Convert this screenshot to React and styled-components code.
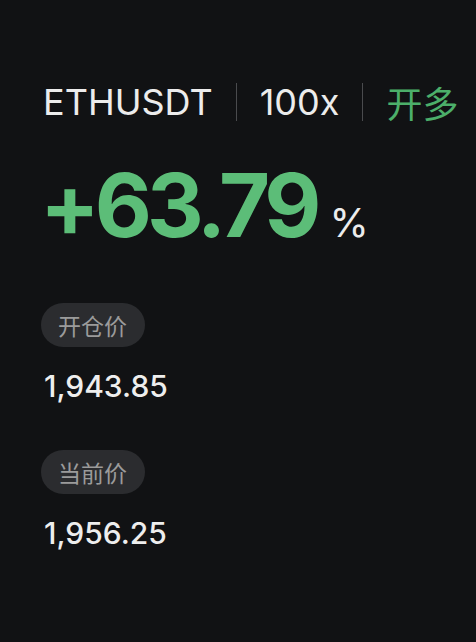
import React from 'react';
import styled, { createGlobalStyle } from 'styled-components';

const GlobalStyle = createGlobalStyle`
  html, body {
    margin: 0;
    padding: 0;
    background: #111214;
  }
  body {
    font-family: Inter, "Noto Sans CJK SC", sans-serif;
  }
`;

const Screen = styled.div`
  width: 476px;
  height: 642px;
  box-sizing: border-box;
  padding: 80px 0 0 43px;
  background: #111214;
  display: flex;
  flex-direction: column;
  align-items: flex-start;
`;

const Header = styled.div`
  display: flex;
  align-items: center;
  gap: 23px;
  height: 44px;
  font-size: 36px;
  line-height: 44px;
  color: #ececec;
`;

const HeaderText = styled.span`
  color: ${p => (p.$accent ? '#4caf6a' : '#ececec')};
  font-family: ${p => (p.$accent ? '"Noto Sans CJK SC", sans-serif' : 'Inter, sans-serif')};
`;

const Divider = styled.span`
  width: 1px;
  height: 38px;
  background: #4a4b4e;
`;

const Profit = styled.div`
  display: flex;
  align-items: baseline;
  gap: 13px;
  margin: 37px 0 0 -3px;
  line-height: 1;
`;

const ProfitValue = styled.span`
  font-size: 88px;
  font-weight: 700;
  color: #5cbd78;
  letter-spacing: -5px;
`;

const Unit = styled.span`
  font-size: 40px;
  color: #ececec;
`;

const Field = styled.div`
  display: flex;
  flex-direction: column;
  align-items: flex-start;
  margin-top: ${p => p.$top}px;
`;

const Tag = styled.span`
  height: 44px;
  margin-left: -2px;
  padding: 0 18px 0 17px;
  border-radius: 22px;
  background: #2b2c2f;
  color: #9b9b9b;
  font-family: "Noto Sans CJK SC", sans-serif;
  font-size: 23px;
  line-height: 44px;
`;

const Price = styled.span`
  margin: 24px 0 0 1px;
  font-size: 30px;
  font-weight: 500;
  line-height: 30px;
  color: #eeeeee;
`;

const fields = [
  { label: '开仓价', value: '1,943.85', top: 54 },
  { label: '当前价', value: '1,956.25', top: 49 },
];

const App = () => (
  <Screen>
    <GlobalStyle />
    <Header>
      <HeaderText>ETHUSDT</HeaderText>
      <Divider />
      <HeaderText>100x</HeaderText>
      <Divider />
      <HeaderText $accent>开多</HeaderText>
    </Header>
    <Profit>
      <ProfitValue>+63.79</ProfitValue>
      <Unit>%</Unit>
    </Profit>
    {fields.map(f => (
      <Field key={f.label} $top={f.top}>
        <Tag>{f.label}</Tag>
        <Price>{f.value}</Price>
      </Field>
    ))}
  </Screen>
);

export default App;
